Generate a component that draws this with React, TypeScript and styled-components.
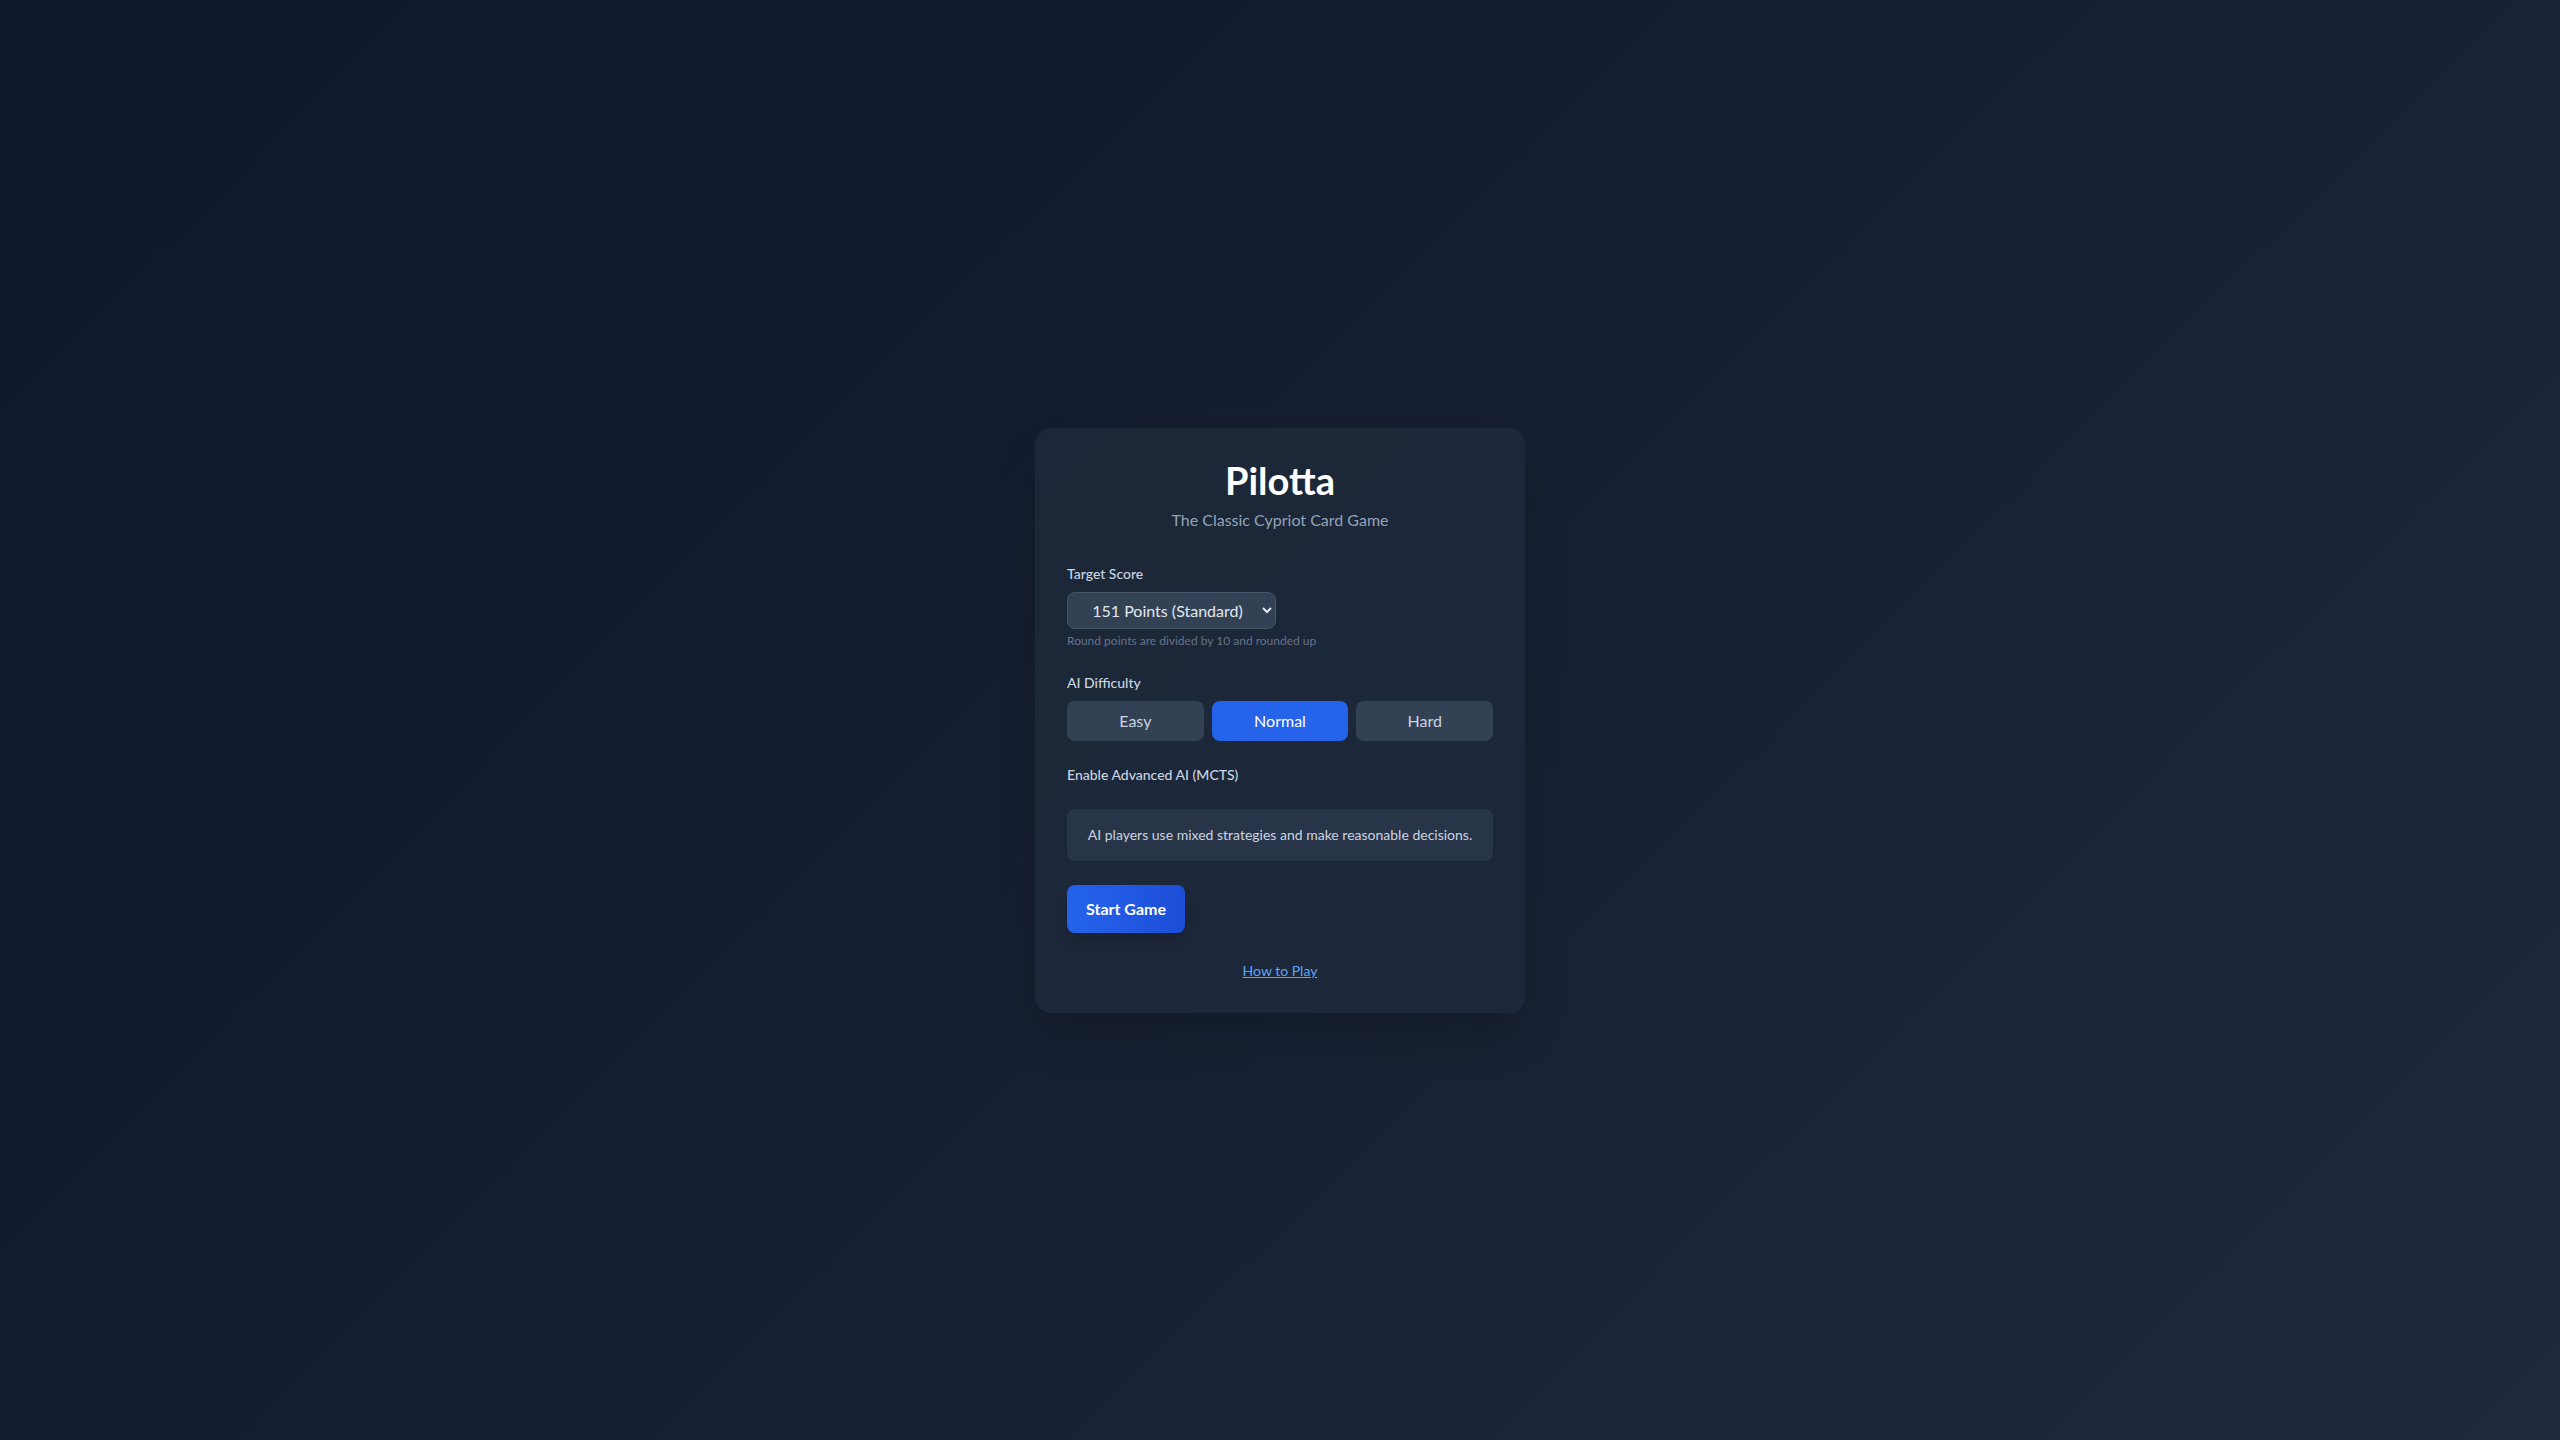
import React, { useState } from 'react';
import styled, { createGlobalStyle } from 'styled-components';

const FONT = `Lato, "Liberation Sans", "Noto Sans", sans-serif`;

const GlobalStyle = createGlobalStyle`
  html, body {
    margin: 0;
    padding: 0;
  }
  body {
    font-family: ${FONT};
    background: #0f172a;
    color: #e2e8f0;
    -webkit-font-smoothing: antialiased;
  }
  * {
    box-sizing: border-box;
  }
`;

const Screen = styled.div`
  min-height: 100vh;
  display: flex;
  align-items: center;
  justify-content: center;
  background: linear-gradient(135deg, #0f172a 0%, #1e293b 100%);
`;

const Card = styled.div`
  width: 490px;
  padding: 32px;
  border-radius: 16px;
  background: rgba(30, 41, 59, 0.8);
  box-shadow: 0 25px 50px -12px rgba(0, 0, 0, 0.25);
  display: flex;
  flex-direction: column;
`;

const Header = styled.div`
  text-align: center;
  margin-bottom: 32px;
`;

const Title = styled.h1`
  margin: 0;
  font-size: 38px;
  line-height: 40px;
  font-weight: 700;
  color: #ffffff;
`;

const Subtitle = styled.p`
  margin: 8px 0 0;
  font-size: 16px;
  line-height: 24px;
  font-weight: 400;
  color: #94a3b8;
`;

const Field = styled.div`
  display: flex;
  flex-direction: column;
  margin-bottom: 24px;
`;

const Label = styled.label<{ $bare?: boolean }>`
  font-size: 14px;
  line-height: 20px;
  font-weight: 500;
  color: #cbd5e1;
  margin-bottom: ${(p) => (p.$bare ? 0 : 8)}px;
`;

const Select = styled.select`
  width: 209px;
  height: 37px;
  padding: 0 8px 0 12px;
  font-family: ${FONT};
  font-size: 16px;
  color: #e2e8f0;
  background: #334155;
  border: 1px solid #475569;
  border-radius: 8px;
  color-scheme: dark;
  text-align: center;
  outline: none;
`;

const Hint = styled.p`
  margin: 4px 0 0;
  font-size: 12px;
  line-height: 16px;
  color: #64748b;
`;

const ButtonGroup = styled.div`
  display: grid;
  grid-template-columns: repeat(3, 1fr);
  gap: 8px;
`;

const DifficultyButton = styled.button<{ $active?: boolean }>`
  height: 40px;
  border: none;
  border-radius: 8px;
  font-family: ${FONT};
  font-size: 16px;
  line-height: 24px;
  cursor: pointer;
  color: ${(p) => (p.$active ? '#ffffff' : '#cbd5e1')};
  background: ${(p) => (p.$active ? '#2563eb' : '#334155')};
`;

const InfoBox = styled.div`
  padding: 16px;
  border-radius: 8px;
  background: rgba(51, 65, 85, 0.5);
  font-size: 14px;
  line-height: 20px;
  color: #cbd5e1;
  text-align: center;
  margin-bottom: 24px;
`;

const StartButton = styled.button`
  align-self: flex-start;
  height: 48px;
  padding: 0 19px;
  border: none;
  border-radius: 8px;
  font-family: ${FONT};
  font-size: 16px;
  font-weight: 700;
  color: #ffffff;
  background: linear-gradient(90deg, #2563eb, #1d4ed8);
  box-shadow: 0 10px 15px -3px rgba(0, 0, 0, 0.1), 0 4px 6px -4px rgba(0, 0, 0, 0.1);
  cursor: pointer;
`;

const HelpLink = styled.a`
  margin-top: 28px;
  align-self: center;
  font-size: 14px;
  line-height: 20px;
  color: #60a5fa;
  text-decoration: underline;
  cursor: pointer;
`;

const difficulties = ['Easy', 'Normal', 'Hard'];

export default function App() {
  const [difficulty, setDifficulty] = useState('Normal');
  const [target, setTarget] = useState('151');

  return (
    <>
      <GlobalStyle />
      <Screen>
        <Card>
          <Header>
            <Title>Pilotta</Title>
            <Subtitle>The Classic Cypriot Card Game</Subtitle>
          </Header>

          <Field>
            <Label>Target Score</Label>
            <Select value={target} onChange={(e) => setTarget(e.target.value)}>
              <option value="101">101 Points (Short)</option>
              <option value="151">151 Points (Standard)</option>
              <option value="201">201 Points (Long)</option>
            </Select>
            <Hint>Round points are divided by 10 and rounded up</Hint>
          </Field>

          <Field>
            <Label>AI Difficulty</Label>
            <ButtonGroup>
              {difficulties.map((d) => (
                <DifficultyButton key={d} $active={d === difficulty} onClick={() => setDifficulty(d)}>
                  {d}
                </DifficultyButton>
              ))}
            </ButtonGroup>
          </Field>

          <Field>
            <Label $bare>Enable Advanced AI (MCTS)</Label>
          </Field>

          <InfoBox>AI players use mixed strategies and make reasonable decisions.</InfoBox>

          <StartButton>Start Game</StartButton>

          <HelpLink>How to Play</HelpLink>
        </Card>
      </Screen>
    </>
  );
}
